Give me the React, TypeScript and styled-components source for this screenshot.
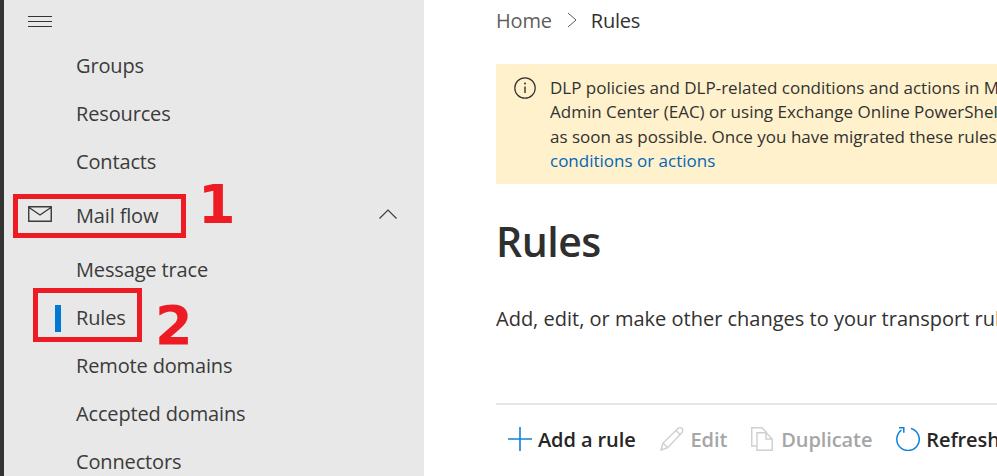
import React from "react";
import styled, { createGlobalStyle } from "styled-components";

const Global = createGlobalStyle`
  html, body {
    margin: 0;
    padding: 0;
    background: #fff;
    overflow: hidden;
  }
  body {
    font-family: "Open Sans", "Noto Sans", "Liberation Sans", sans-serif;
  }
`;

const Page = styled.div`
  position: relative;
  width: 997px;
  height: 476px;
  display: flex;
  overflow: hidden;
`;

const Sidebar = styled.nav`
  width: 420px;
  height: 476px;
  flex: none;
  background: #e8e8e8;
  border-left: 4px solid #333;
  overflow: hidden;
`;

const MenuButton = styled.div`
  height: 42px;
  padding: 2px 0 0 24px;
  box-sizing: border-box;
  display: flex;
  align-items: center;
`;

const NavRow = styled.div<{ $tall?: boolean }>`
  height: ${(p) => (p.$tall ? 60 : 48)}px;
  display: flex;
  align-items: center;
  font-size: 20px;
  letter-spacing: -0.15px;
  color: #3b3b3b;
`;

const IconSlot = styled.div`
  width: 72px;
  flex: none;
  padding-left: 24px;
  box-sizing: border-box;
  display: flex;
  align-items: center;
`;

const ActiveBar = styled.div`
  width: 6px;
  height: 27px;
  margin-left: 27px;
  background: #0078d4;
`;

const MailIcon = styled.svg`
  margin-bottom: 4px;
`;

const NavLabel = styled.span`
  flex: 1;
  padding-bottom: 2px;
`;

const Collapse = styled.svg`
  margin: 0 27px 5px 0;
`;

const Main = styled.main`
  flex: 1;
  min-width: 0;
  padding-left: 72px;
  overflow: hidden;
`;

const Breadcrumb = styled.div`
  height: 64px;
  padding-bottom: 24px;
  box-sizing: border-box;
  display: flex;
  align-items: center;
  font-size: 20px;
  letter-spacing: -0.2px;
`;

const Crumb = styled.span<{ $current?: boolean }>`
  color: ${(p) => (p.$current ? "#323130" : "#605e5c")};
`;

const CrumbChevron = styled.svg`
  margin: 0 14px 0 15px;
`;

const Notice = styled.div`
  height: 120px;
  box-sizing: border-box;
  padding: 12px 0 0 18px;
  background: #fff1cc;
  display: flex;
  gap: 14px;
  color: #323130;
  font-size: 17px;
  line-height: 24.3px;
  white-space: nowrap;
`;

const NoticeIcon = styled.svg`
  flex: none;
  margin-top: 1px;
`;

const NoticeLink = styled.span`
  color: #0067b8;
`;

const Title = styled.h1`
  margin: 28px 0 0;
  height: 58px;
  display: flex;
  align-items: center;
  font-size: 41px;
  font-weight: 600;
  letter-spacing: -0.5px;
  color: #2f2f2f;
`;

const Description = styled.p`
  margin: 35px 0 0;
  height: 28px;
  line-height: 28px;
  font-size: 20px;
  color: #323130;
  white-space: nowrap;
`;

const Toolbar = styled.div`
  margin-top: 70px;
  height: 68px;
  border-top: 2px solid #e6e6e6;
  display: flex;
  align-items: center;
  padding-left: 12px;
  white-space: nowrap;
`;

const Action = styled.div<{ $disabled?: boolean; $gap: number; $end: number }>`
  display: flex;
  align-items: center;
  gap: ${(p) => p.$gap}px;
  margin-right: ${(p) => p.$end}px;
  font-size: 20px;
  font-weight: 600;
  letter-spacing: -0.1px;
  color: ${(p) => (p.$disabled ? "#a6a6a6" : "#262626")};
`;

const Callout = styled.div<{ $x: number; $y: number; $w: number; $h: number }>`
  position: absolute;
  left: ${(p) => p.$x}px;
  top: ${(p) => p.$y}px;
  width: ${(p) => p.$w}px;
  height: ${(p) => p.$h}px;
  box-sizing: border-box;
  border: 5px solid #ed1c24;
`;

const CalloutNumber = styled.div<{ $x: number; $y: number }>`
  position: absolute;
  left: ${(p) => p.$x}px;
  top: ${(p) => p.$y}px;
  font-family: "DejaVu Sans", sans-serif;
  font-size: 54px;
  line-height: 56px;
  font-weight: 700;
  color: #ed1c24;
`;

const NAV_TOP = ["Groups", "Resources", "Contacts"];
const NAV_BOTTOM = ["Remote domains", "Accepted domains", "Connectors"];

export default function App() {
  return (
    <Page>
      <Global />
      <Sidebar>
        <MenuButton>
          <svg width="24" height="12" viewBox="0 0 24 12">
            <path d="M0 .5h24M0 5.5h24M0 10.5h24" stroke="#333" fill="none" />
          </svg>
        </MenuButton>
        {NAV_TOP.map((item) => (
          <NavRow key={item}>
            <IconSlot />
            <NavLabel>{item}</NavLabel>
          </NavRow>
        ))}
        <NavRow $tall>
          <IconSlot>
            <MailIcon width="24" height="16" viewBox="0 0 24 16">
              <path
                d="M.75.75h22.5v14.5H.75zM1 1.5l11 7.5 11-7.5"
                stroke="#3b3b3b"
                strokeWidth="1.4"
                fill="none"
              />
            </MailIcon>
          </IconSlot>
          <NavLabel>Mail flow</NavLabel>
          <Collapse width="18" height="10" viewBox="0 0 18 10">
            <path d="M.5 9.5 9 1l8.5 8.5" stroke="#3b3b3b" strokeWidth="1.2" fill="none" />
          </Collapse>
        </NavRow>
        <NavRow>
          <IconSlot />
          <NavLabel>Message trace</NavLabel>
        </NavRow>
        <NavRow>
          <IconSlot>
            <ActiveBar />
          </IconSlot>
          <NavLabel>Rules</NavLabel>
        </NavRow>
        {NAV_BOTTOM.map((item) => (
          <NavRow key={item}>
            <IconSlot />
            <NavLabel>{item}</NavLabel>
          </NavRow>
        ))}
      </Sidebar>
      <Main>
        <Breadcrumb>
          <Crumb>Home</Crumb>
          <CrumbChevron width="10" height="16" viewBox="0 0 10 16">
            <path d="M1 1l8 7-8 7" stroke="#605e5c" strokeWidth="1" fill="none" />
          </CrumbChevron>
          <Crumb $current>Rules</Crumb>
        </Breadcrumb>
        <Notice>
          <NoticeIcon width="22" height="22" viewBox="0 0 22 22">
            <circle cx="11" cy="11" r="10.2" stroke="#323130" strokeWidth="1.2" fill="none" />
            <path d="M11 9.5v6.5" stroke="#323130" strokeWidth="1.4" />
            <circle cx="11" cy="6.6" r="1" fill="#323130" />
          </NoticeIcon>
          <div>
            DLP policies and DLP-related conditions and actions in Mail flow rules
            <br />
            Admin Center (EAC) or using Exchange Online PowerShell
            <br />
            as soon as possible. Once you have migrated these rules
            <br />
            <NoticeLink>conditions or actions</NoticeLink>
          </div>
        </Notice>
        <Title>Rules</Title>
        <Description>Add, edit, or make other changes to your transport rules</Description>
        <Toolbar>
          <Action $gap={6} $end={24}>
            <svg width="24" height="24" viewBox="0 0 24 24">
              <path d="M12 0v24M0 12h24" stroke="#0f82d8" strokeWidth="1.6" fill="none" />
            </svg>
            Add a rule
          </Action>
          <Action $disabled $gap={7} $end={24}>
            <svg width="24" height="24" viewBox="0 0 24 24">
              <path
                d="M1 23l2-7L18 1.5c1-1 3-1 4 0s1 3 0 4L7.5 21zM3 16l5 5M16 3.5l4.5 4.5"
                stroke="#cfcfcf"
                strokeWidth="1.4"
                fill="none"
              />
            </svg>
            Edit
          </Action>
          <Action $disabled $gap={8} $end={23}>
            <svg width="22" height="24" viewBox="0 0 22 24">
              <path
                d="M6 19H.75V.75H11L16 6M6 5.75h9l6.25 6.25v11.25H6zM15 5.75V12h6.25"
                stroke="#cfcfcf"
                strokeWidth="1.4"
                fill="none"
              />
            </svg>
            Duplicate
          </Action>
          <Action $gap={6} $end={0}>
            <svg width="25" height="24" viewBox="0 0 25 24">
              <path
                d="M6.5 3.2A11.2 11.2 0 1 0 16 1.5"
                stroke="#0f82d8"
                strokeWidth="1.5"
                fill="none"
              />
              <path d="M4 .8h4.8v5" stroke="#0f82d8" strokeWidth="1.5" fill="none" />
            </svg>
            Refresh
          </Action>
        </Toolbar>
      </Main>
      <Callout $x={13} $y={194} $w={173} $h={44} />
      <CalloutNumber $x={198} $y={177}>1</CalloutNumber>
      <Callout $x={33} $y={288} $w={109} $h={54} />
      <CalloutNumber $x={155} $y={298}>2</CalloutNumber>
    </Page>
  );
}
